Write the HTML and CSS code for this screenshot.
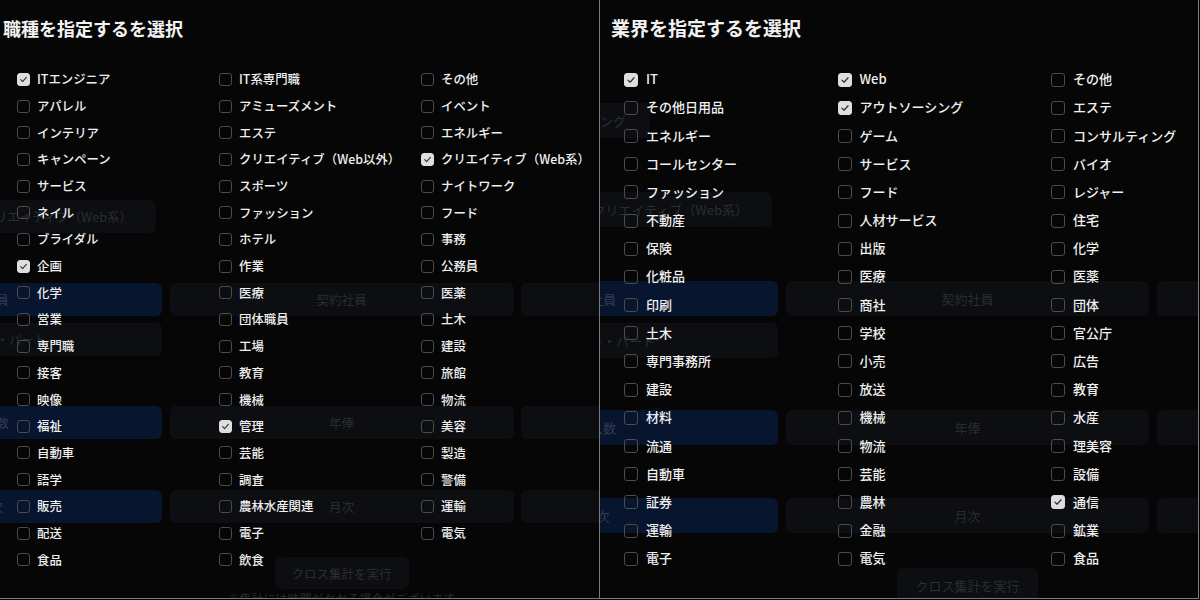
FILE: index.html
```html
<!DOCTYPE html>
<html lang="ja">
<head>
<meta charset="utf-8">
<title>職種・業界を選択</title>
<link rel="stylesheet" href="styles.css">
</head>
<body>
<div class="screen">

  <section class="panel panel-job">
    <div class="page">
      <div class="chips chips-b"><span class="chip">クリエイティブ（Web系）</span></div>
      <div class="opts opts-1"><span class="opt sel">正社員</span><span class="opt">契約社員</span><span class="opt">派遣社員</span></div>
      <div class="opts opts-2"><span class="opt">アルバイト・パート</span></div>
      <div class="opts opts-3"><span class="opt sel">求人数</span><span class="opt">年俸</span><span class="opt">月給</span></div>
      <div class="opts opts-4"><span class="opt sel">日次</span><span class="opt">月次</span><span class="opt">年次</span></div>
      <button class="run" type="button">クロス集計を実行</button>
      <p class="note">※集計には時間がかかる場合がございます</p>
    </div>
    <div class="modal">
      <h2 class="modal-title">職種を指定するを選択</h2>
      <ul class="checks">
        <li class="check on"><span class="box"><svg viewBox="0 0 14 14"><path d="M3.4 7.2 L5.9 9.6 L10.6 4.4"/></svg></span><span class="label">ITエンジニア</span></li>
        <li class="check"><span class="box"></span><span class="label">アパレル</span></li>
        <li class="check"><span class="box"></span><span class="label">インテリア</span></li>
        <li class="check"><span class="box"></span><span class="label">キャンペーン</span></li>
        <li class="check"><span class="box"></span><span class="label">サービス</span></li>
        <li class="check"><span class="box"></span><span class="label">ネイル</span></li>
        <li class="check"><span class="box"></span><span class="label">ブライダル</span></li>
        <li class="check on"><span class="box"><svg viewBox="0 0 14 14"><path d="M3.4 7.2 L5.9 9.6 L10.6 4.4"/></svg></span><span class="label">企画</span></li>
        <li class="check"><span class="box"></span><span class="label">化学</span></li>
        <li class="check"><span class="box"></span><span class="label">営業</span></li>
        <li class="check"><span class="box"></span><span class="label">専門職</span></li>
        <li class="check"><span class="box"></span><span class="label">接客</span></li>
        <li class="check"><span class="box"></span><span class="label">映像</span></li>
        <li class="check"><span class="box"></span><span class="label">福祉</span></li>
        <li class="check"><span class="box"></span><span class="label">自動車</span></li>
        <li class="check"><span class="box"></span><span class="label">語学</span></li>
        <li class="check"><span class="box"></span><span class="label">販売</span></li>
        <li class="check"><span class="box"></span><span class="label">配送</span></li>
        <li class="check"><span class="box"></span><span class="label">食品</span></li>

        <li class="check"><span class="box"></span><span class="label">IT系専門職</span></li>
        <li class="check"><span class="box"></span><span class="label">アミューズメント</span></li>
        <li class="check"><span class="box"></span><span class="label">エステ</span></li>
        <li class="check"><span class="box"></span><span class="label">クリエイティブ（Web以外）</span></li>
        <li class="check"><span class="box"></span><span class="label">スポーツ</span></li>
        <li class="check"><span class="box"></span><span class="label">ファッション</span></li>
        <li class="check"><span class="box"></span><span class="label">ホテル</span></li>
        <li class="check"><span class="box"></span><span class="label">作業</span></li>
        <li class="check"><span class="box"></span><span class="label">医療</span></li>
        <li class="check"><span class="box"></span><span class="label">団体職員</span></li>
        <li class="check"><span class="box"></span><span class="label">工場</span></li>
        <li class="check"><span class="box"></span><span class="label">教育</span></li>
        <li class="check"><span class="box"></span><span class="label">機械</span></li>
        <li class="check on"><span class="box"><svg viewBox="0 0 14 14"><path d="M3.4 7.2 L5.9 9.6 L10.6 4.4"/></svg></span><span class="label">管理</span></li>
        <li class="check"><span class="box"></span><span class="label">芸能</span></li>
        <li class="check"><span class="box"></span><span class="label">調査</span></li>
        <li class="check"><span class="box"></span><span class="label">農林水産関連</span></li>
        <li class="check"><span class="box"></span><span class="label">電子</span></li>
        <li class="check"><span class="box"></span><span class="label">飲食</span></li>

        <li class="check"><span class="box"></span><span class="label">その他</span></li>
        <li class="check"><span class="box"></span><span class="label">イベント</span></li>
        <li class="check"><span class="box"></span><span class="label">エネルギー</span></li>
        <li class="check on"><span class="box"><svg viewBox="0 0 14 14"><path d="M3.4 7.2 L5.9 9.6 L10.6 4.4"/></svg></span><span class="label">クリエイティブ（Web系）</span></li>
        <li class="check"><span class="box"></span><span class="label">ナイトワーク</span></li>
        <li class="check"><span class="box"></span><span class="label">フード</span></li>
        <li class="check"><span class="box"></span><span class="label">事務</span></li>
        <li class="check"><span class="box"></span><span class="label">公務員</span></li>
        <li class="check"><span class="box"></span><span class="label">医薬</span></li>
        <li class="check"><span class="box"></span><span class="label">土木</span></li>
        <li class="check"><span class="box"></span><span class="label">建設</span></li>
        <li class="check"><span class="box"></span><span class="label">旅館</span></li>
        <li class="check"><span class="box"></span><span class="label">物流</span></li>
        <li class="check"><span class="box"></span><span class="label">美容</span></li>
        <li class="check"><span class="box"></span><span class="label">製造</span></li>
        <li class="check"><span class="box"></span><span class="label">警備</span></li>
        <li class="check"><span class="box"></span><span class="label">運輸</span></li>
        <li class="check"><span class="box"></span><span class="label">電気</span></li>
      </ul>
    </div>
  </section>

  <section class="panel panel-industry">
    <div class="page">
      <div class="chips chips-a"><span class="chip">アウトソーシング</span></div>
      <div class="chips chips-b"><span class="chip">クリエイティブ（Web系）</span></div>
      <div class="opts opts-1"><span class="opt sel">正社員</span><span class="opt">契約社員</span><span class="opt">派遣社員</span></div>
      <div class="opts opts-2"><span class="opt">アルバイト・パート</span></div>
      <div class="opts opts-3"><span class="opt sel">求人数</span><span class="opt">年俸</span><span class="opt">月給</span></div>
      <div class="opts opts-4"><span class="opt sel">日次</span><span class="opt">月次</span><span class="opt">年次</span></div>
      <button class="run" type="button">クロス集計を実行</button>
      <p class="note">※集計には時間がかかる場合がございます</p>
    </div>
    <div class="modal">
      <h2 class="modal-title">業界を指定するを選択</h2>
      <ul class="checks">
        <li class="check on"><span class="box"><svg viewBox="0 0 14 14"><path d="M3.4 7.2 L5.9 9.6 L10.6 4.4"/></svg></span><span class="label">IT</span></li>
        <li class="check"><span class="box"></span><span class="label">その他日用品</span></li>
        <li class="check"><span class="box"></span><span class="label">エネルギー</span></li>
        <li class="check"><span class="box"></span><span class="label">コールセンター</span></li>
        <li class="check"><span class="box"></span><span class="label">ファッション</span></li>
        <li class="check"><span class="box"></span><span class="label">不動産</span></li>
        <li class="check"><span class="box"></span><span class="label">保険</span></li>
        <li class="check"><span class="box"></span><span class="label">化粧品</span></li>
        <li class="check"><span class="box"></span><span class="label">印刷</span></li>
        <li class="check"><span class="box"></span><span class="label">土木</span></li>
        <li class="check"><span class="box"></span><span class="label">専門事務所</span></li>
        <li class="check"><span class="box"></span><span class="label">建設</span></li>
        <li class="check"><span class="box"></span><span class="label">材料</span></li>
        <li class="check"><span class="box"></span><span class="label">流通</span></li>
        <li class="check"><span class="box"></span><span class="label">自動車</span></li>
        <li class="check"><span class="box"></span><span class="label">証券</span></li>
        <li class="check"><span class="box"></span><span class="label">運輸</span></li>
        <li class="check"><span class="box"></span><span class="label">電子</span></li>

        <li class="check on"><span class="box"><svg viewBox="0 0 14 14"><path d="M3.4 7.2 L5.9 9.6 L10.6 4.4"/></svg></span><span class="label">Web</span></li>
        <li class="check on"><span class="box"><svg viewBox="0 0 14 14"><path d="M3.4 7.2 L5.9 9.6 L10.6 4.4"/></svg></span><span class="label">アウトソーシング</span></li>
        <li class="check"><span class="box"></span><span class="label">ゲーム</span></li>
        <li class="check"><span class="box"></span><span class="label">サービス</span></li>
        <li class="check"><span class="box"></span><span class="label">フード</span></li>
        <li class="check"><span class="box"></span><span class="label">人材サービス</span></li>
        <li class="check"><span class="box"></span><span class="label">出版</span></li>
        <li class="check"><span class="box"></span><span class="label">医療</span></li>
        <li class="check"><span class="box"></span><span class="label">商社</span></li>
        <li class="check"><span class="box"></span><span class="label">学校</span></li>
        <li class="check"><span class="box"></span><span class="label">小売</span></li>
        <li class="check"><span class="box"></span><span class="label">放送</span></li>
        <li class="check"><span class="box"></span><span class="label">機械</span></li>
        <li class="check"><span class="box"></span><span class="label">物流</span></li>
        <li class="check"><span class="box"></span><span class="label">芸能</span></li>
        <li class="check"><span class="box"></span><span class="label">農林</span></li>
        <li class="check"><span class="box"></span><span class="label">金融</span></li>
        <li class="check"><span class="box"></span><span class="label">電気</span></li>

        <li class="check"><span class="box"></span><span class="label">その他</span></li>
        <li class="check"><span class="box"></span><span class="label">エステ</span></li>
        <li class="check"><span class="box"></span><span class="label">コンサルティング</span></li>
        <li class="check"><span class="box"></span><span class="label">バイオ</span></li>
        <li class="check"><span class="box"></span><span class="label">レジャー</span></li>
        <li class="check"><span class="box"></span><span class="label">住宅</span></li>
        <li class="check"><span class="box"></span><span class="label">化学</span></li>
        <li class="check"><span class="box"></span><span class="label">医薬</span></li>
        <li class="check"><span class="box"></span><span class="label">団体</span></li>
        <li class="check"><span class="box"></span><span class="label">官公庁</span></li>
        <li class="check"><span class="box"></span><span class="label">広告</span></li>
        <li class="check"><span class="box"></span><span class="label">教育</span></li>
        <li class="check"><span class="box"></span><span class="label">水産</span></li>
        <li class="check"><span class="box"></span><span class="label">理美容</span></li>
        <li class="check"><span class="box"></span><span class="label">設備</span></li>
        <li class="check on"><span class="box"><svg viewBox="0 0 14 14"><path d="M3.4 7.2 L5.9 9.6 L10.6 4.4"/></svg></span><span class="label">通信</span></li>
        <li class="check"><span class="box"></span><span class="label">鉱業</span></li>
        <li class="check"><span class="box"></span><span class="label">食品</span></li>
      </ul>
    </div>
  </section>

</div>
</body>
</html>
```

FILE: styles.css
```css
* {
  box-sizing: border-box;
  margin: 0;
  padding: 0;
}

html,
body {
  background: #000;
}

body {
  width: 1200px;
  height: 600px;
  overflow: hidden;
  font-family: "Noto Sans CJK JP", "Noto Sans", sans-serif;
}

.screen {
  display: flex;
  width: 1200px;
  height: 600px;
}

/* ---------- panels ---------- */
.panel {
  position: relative;
  height: 599px;
  overflow: hidden;
  background: #060606;
  border-bottom: 1px solid #7a7a7a;
}

.panel-job {
  width: 600px;
  border-right: 1px solid #7a7a7a;
  --page-x: -182px;
  --opt-w: 344px;
  --opt-gap: 7.5px;
  --opt-h: 33px;
  --bg-fs: 12.5px;
  --run-w: 134px;
  --run-h: 32px;

  --title-fs: 18px;
  --title-top: 18.5px;
  --title-x: 3px;
  --list-top: 29.5px;
  --list-x: 14px;
  --rows: 19;
  --row: 26.7px;
  --col: 202px;
  --box: 13px;
  --box-gap: 7px;
  --fs: 12.4px;
}

.panel-industry {
  width: 599px;
  border-right: 1px solid #7a7a7a;
  --page-x: -185px;
  --opt-w: 363px;
  --opt-gap: 8px;
  --opt-h: 35px;
  --bg-fs: 13px;
  --run-w: 141px;
  --run-h: 34px;

  --title-fs: 19px;
  --title-top: 17.5px;
  --title-x: 11px;
  --list-top: 29px;
  --list-x: 13px;
  --rows: 18;
  --row: 28.2px;
  --col: 213.5px;
  --box: 14px;
  --box-gap: 8px;
  --fs: 13px;
}

/* ---------- faint page behind the dialog ---------- */
.page {
  display: flex;
  flex-direction: column;
  margin-left: var(--page-x);
  width: calc(var(--opt-w) * 3 + var(--opt-gap) * 2);
  font-size: var(--bg-fs);
  color: #2a2c31;
}

.chips {
  display: flex;
  justify-content: flex-end;
  height: var(--opt-h);
}

.chip {
  display: flex;
  align-items: center;
  padding: 0 24px;
  border-radius: 6px;
  background: #0d0e12;
  color: #2b2d33;
  white-space: nowrap;
}

.panel-job .chips-b { margin-top: 200px; width: 338px; }
.panel-industry .chips-a { margin-top: 103px; width: 235px; }
.panel-industry .chips-b { margin-top: 54px; width: 357px; }

.opts {
  display: grid;
  grid-template-columns: repeat(3, var(--opt-w));
  column-gap: var(--opt-gap);
  height: var(--opt-h);
}

.opt {
  display: flex;
  align-items: center;
  justify-content: center;
  border-radius: 6px;
  background: #0d0e12;
  color: #2a2c31;
  white-space: nowrap;
}

.opt.sel {
  background: #08152f;
  color: #343c4e;
}

.panel-job .opts-1 { margin-top: 50px; }
.panel-job .opts-2 { margin-top: 7px; }
.panel-job .opts-3 { margin-top: 50px; }
.panel-job .opts-4 { margin-top: 51px; }
.panel-job .run { margin-top: 34px; }

.panel-industry .opts-1 { margin-top: 54px; }
.panel-industry .opts-2 { margin-top: 7px; }
.panel-industry .opts-3 { margin-top: 52px; }
.panel-industry .opts-4 { margin-top: 53px; }
.panel-industry .run { margin-top: 35px; }

.run {
  align-self: center;
  width: var(--run-w);
  height: var(--run-h);
  border: none;
  border-radius: 6px;
  background: #0d0e12;
  color: #2b2d33;
  font-family: inherit;
  font-size: var(--bg-fs);
}

.note {
  align-self: center;
  margin-top: 2px;
  font-size: 12px;
  line-height: 16px;
  color: #2a2c31;
}

/* ---------- dialog content ---------- */
.modal {
  position: absolute;
  inset: 0;
  padding: var(--title-top) 0 0 var(--title-x);
  color: #f0f0f0;
}

.modal-title {
  font-size: var(--title-fs);
  line-height: var(--title-fs);
  font-weight: 700;
  letter-spacing: 0;
  color: #f2f2f2;
}

.checks {
  list-style: none;
  display: grid;
  grid-auto-flow: column;
  grid-template-rows: repeat(var(--rows), var(--row));
  grid-template-columns: repeat(3, var(--col));
  margin-top: var(--list-top);
  margin-left: var(--list-x);
}

.check {
  display: flex;
  align-items: center;
  gap: var(--box-gap);
  font-size: var(--fs);
  font-weight: 500;
  white-space: nowrap;
}

.box {
  flex: none;
  display: flex;
  width: var(--box);
  height: var(--box);
  border: 1px solid #4c4c4c;
  border-radius: 3px;
}

.check.on .box {
  background: #dedede;
  border-color: #dedede;
}

.box svg {
  width: 100%;
  height: 100%;
  fill: none;
  stroke: #2e2e2e;
  stroke-width: 1.4;
  stroke-linecap: round;
  stroke-linejoin: round;
}

.label {
  line-height: 1.3;
}
```
